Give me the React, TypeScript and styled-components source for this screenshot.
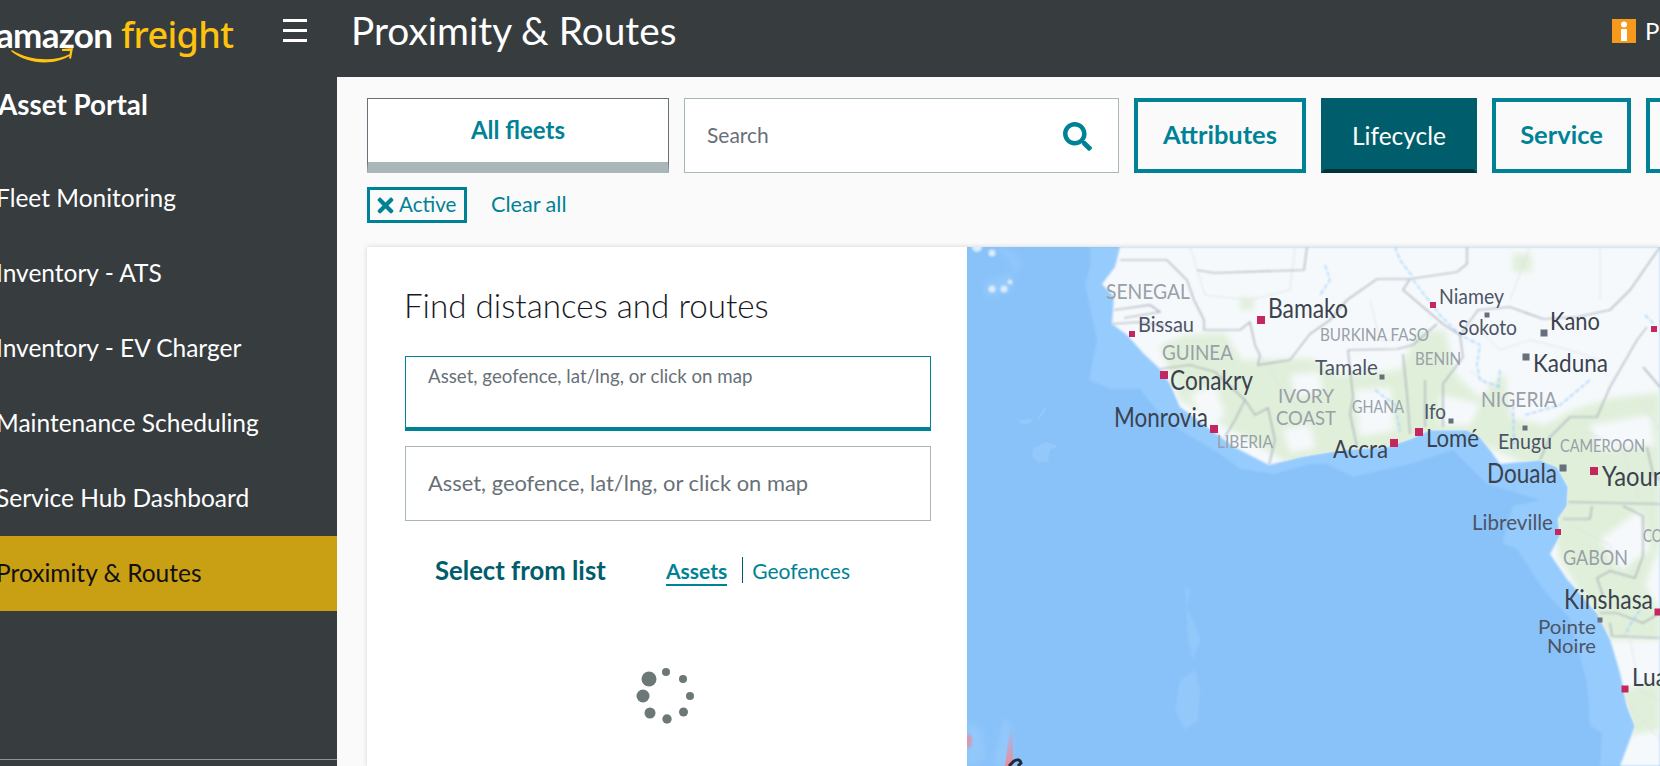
import React from 'react'
import { FaSearch, FaTimes } from 'react-icons/fa'
import styled, { createGlobalStyle } from 'styled-components'

const GlobalStyle = createGlobalStyle`
  html, body {
    margin: 0;
    padding: 0;
    overflow: hidden;
    background: #fafafa;
  }
  * {
    box-sizing: border-box;
  }
`

const FONT = 'Lato, "Noto Sans", "Liberation Sans", sans-serif'
const TEAL = '#008296'
const DARK_TEAL = '#005d6b'
const CHROME = '#373c3f'

const Page = styled.div`
  display: flex;
  flex-direction: column;
  width: 1660px;
  height: 766px;
  overflow: hidden;
  font-family: ${FONT};
`

const TopBar = styled.header`
  flex: none;
  display: flex;
  align-items: center;
  height: 77px;
  background: ${CHROME};
  color: #fff;
`

const Logo = styled.div`
  position: relative;
  flex: none;
  width: 287px;
  margin-left: -4px;
  display: flex;
  align-items: baseline;
  gap: 9px;
  height: 77px;
  padding-top: 11px;
  font-size: 35px;
  line-height: 47px;
`

const LogoWord = styled.span`
  font-weight: 700;
  letter-spacing: -0.7px;
`

const LogoFreight = styled.span`
  color: #ffc20e;
  font-family: "Noto Sans", Lato, sans-serif;
  font-size: 36px;
  font-weight: 500;
  letter-spacing: -0.6px;
`

const LogoSmile = styled.svg`
  position: absolute;
  left: 15px;
  top: 48px;
`

const MenuButton = styled.div`
  flex: none;
  display: flex;
  flex-direction: column;
  gap: 7px;
  width: 24px;
  margin-top: -17px;
  span {
    height: 3px;
    background: #fff;
  }
`

const PageTitle = styled.h1`
  margin: -18px 0 0 44px;
  flex: 1;
  font-size: 38.8px;
  font-weight: 400;
`

const Notice = styled.div`
  flex: none;
  display: flex;
  align-items: center;
  gap: 9px;
  width: 100px;
  margin: -16px -52px 0 0;
  font-size: 24px;
  svg {
    flex: none;
  }
`

const Body = styled.div`
  flex: 1;
  display: flex;
  min-height: 0;
`

const Sidebar = styled.nav`
  flex: none;
  display: flex;
  flex-direction: column;
  width: 337px;
  padding-top: 11px;
  background: ${CHROME};
  color: #fff;
`

const PortalName = styled.div`
  height: 34px;
  margin: 0 0 39px -2px;
  font-size: 27.8px;
  line-height: 34px;
  font-weight: 700;
`

const NavItem = styled.div<{ $active?: boolean }>`
  display: flex;
  align-items: center;
  height: 75px;
  padding-bottom: 2px;
  text-indent: -4px;
  font-size: 24.5px;
  background: ${(p) => (p.$active ? '#c99f13' : 'transparent')};
  color: ${(p) => (p.$active ? '#111' : '#fff')};
`

const SidebarFooter = styled.div`
  flex: none;
  height: 7px;
  margin-top: auto;
  border-top: 1px solid #8d9194;
`

const Main = styled.main`
  flex: 1;
  min-width: 0;
  padding: 21px 0 0 30px;
  background: #fafafa;
  overflow: hidden;
`

const Toolbar = styled.div`
  display: flex;
  gap: 15px;
  height: 75px;
`

const FleetTab = styled.div`
  flex: none;
  display: flex;
  justify-content: center;
  width: 302px;
  padding-top: 17px;
  border: 1px solid #687078;
  border-bottom-width: 11px;
  border-bottom-color: #aab7b8;
  background: #fff;
  color: ${TEAL};
  font-size: 24px;
  line-height: 28px;
  font-weight: 700;
`

const SearchBox = styled.div`
  flex: none;
  display: flex;
  align-items: center;
  justify-content: space-between;
  width: 435px;
  padding: 0 26px 3px 22px;
  border: 1px solid #aab7b8;
  background: #fff;
  color: #687078;
  font-size: 21px;
  svg {
    color: ${TEAL};
    margin-top: 5px;
  }
`

const FilterButton = styled.div<{ $active?: boolean; $width: number }>`
  flex: none;
  display: flex;
  align-items: center;
  justify-content: center;
  width: ${(p) => p.$width}px;
  padding-bottom: ${(p) => (p.$active ? 0 : 3)}px;
  border: 4px solid ${(p) => (p.$active ? DARK_TEAL : TEAL)};
  border-bottom-color: ${(p) => (p.$active ? '#00323b' : TEAL)};
  background: ${(p) => (p.$active ? DARK_TEAL : 'transparent')};
  color: ${(p) => (p.$active ? '#fff' : TEAL)};
  font-size: ${(p) => (p.$active ? 24.5 : 25.5)}px;
  font-weight: ${(p) => (p.$active ? 400 : 700)};
`

const ChipRow = styled.div`
  display: flex;
  align-items: center;
  gap: 24px;
  height: 36px;
  margin-top: 14px;
`

const Chip = styled.div`
  display: flex;
  align-items: center;
  gap: 2px;
  width: 100px;
  height: 36px;
  padding: 0 0 2px 4px;
  border: 3px solid ${TEAL};
  color: ${TEAL};
  font-size: 20.6px;
  svg {
    flex: none;
    margin-top: 2px;
  }
`

const ClearAll = styled.span`
  margin-top: -2px;
  color: ${TEAL};
  font-size: 21.6px;
`

const Workspace = styled.section`
  display: flex;
  height: 519px;
  margin-top: 24px;
  box-shadow: 0 0 5px rgba(0, 0, 0, 0.16);
`

const Panel = styled.div`
  flex: none;
  width: 600px;
  padding: 38px 36px 0 38px;
  background: #fff;
`

const PanelTitle = styled.h2`
  margin: 0 0 30px -1px;
  height: 41px;
  font-size: 33.2px;
  line-height: 41px;
  font-weight: 300;
  color: #16191f;
`

const Field = styled.div<{ $focused?: boolean }>`
  display: flex;
  align-items: ${(p) => (p.$focused ? 'flex-start' : 'center')};
  height: 75px;
  margin-bottom: 15px;
  padding: ${(p) => (p.$focused ? '9px 22px 0' : '0 22px 2px')};
  border: 1px solid ${(p) => (p.$focused ? TEAL : '#aab7b8')};
  border-bottom-width: ${(p) => (p.$focused ? 4 : 1)}px;
  color: #687078;
  font-size: ${(p) => (p.$focused ? 18.7 : 21.9)}px;
  line-height: 20px;
`

const ListHeader = styled.div`
  display: flex;
  align-items: center;
  height: 30px;
  margin: 34px 0 0 30px;
`

const ListTitle = styled.div`
  width: 231px;
  color: ${DARK_TEAL};
  font-size: 25.7px;
  font-weight: 700;
`

const ListTab = styled.div<{ $active?: boolean }>`
  height: 28px;
  margin-top: 3px;
  color: ${TEAL};
  font-size: 21px;
  line-height: 26px;
  font-weight: ${(p) => (p.$active ? 700 : 400)};
  border-bottom: ${(p) => (p.$active ? `2px solid ${TEAL}` : 'none')};
`

const ListDivider = styled.div`
  width: 1px;
  height: 26px;
  margin: 0 9px 0 15px;
  background: ${DARK_TEAL};
`

const Spinner = styled.svg`
  display: block;
  margin: 79px 0 0 230px;
  fill: #6c7778;
`

const MapPane = styled.div`
  flex: none;
  width: 693px;
  background: #88c2f9;
`

const MapCanvas = styled.svg`
  display: block;
  width: 693px;
  height: 519px;
`

const CoastShelf = styled.polygon`
  fill: #96cbfd;
`

const Land = styled.polygon`
  fill: #f6f9fc;
`

const Forest = styled.path`
  fill: #e0efda;
`

const Border = styled.polyline<{ $major?: boolean }>`
  fill: none;
  stroke: ${(p) => (p.$major ? '#a3aab4' : '#dde1e5')};
  stroke-width: ${(p) => (p.$major ? 1.2 : 0.9)};
`

const River = styled.polyline`
  fill: none;
  stroke: #92c9fb;
  stroke-width: 1.2;
  stroke-dasharray: 5 2;
`

const Seamount = styled.path`
  fill: #93c8fb;
`

const Islet = styled.circle`
  fill: #dcedfd;
`

const MapLabel = styled.text<{ $size: number; $tone: string }>`
  font-family: ${FONT};
  font-size: ${(p) => p.$size * 1.2}px;
  fill: ${(p) => p.$tone};
`

const Pin = styled.rect<{ $city?: boolean }>`
  fill: ${(p) => (p.$city ? '#c4275f' : '#666f7d')};
`

const Marker = styled.path`
  fill: none;
  stroke: #1f2a36;
  stroke-width: 3;
`

const CITY = '#3b424d'
const TOWN = '#4c5566'
const REGION = '#98a0a8'

const labels: [string, number, number, number, number, string][] = [
  ['SENEGAL', 1106, 299, 84, 18, REGION],
  ['Bissau', 1138, 332, 56, 18, TOWN],
  ['Bamako', 1268, 318, 80, 22, CITY],
  ['GUINEA', 1162, 360, 71, 18, REGION],
  ['Conakry', 1170, 390, 83, 22, CITY],
  ['Monrovia', 1114, 427, 94, 22, CITY],
  ['LIBERIA', 1217, 448, 56, 15, REGION],
  ['IVORY', 1278, 403, 56, 16, REGION],
  ['COAST', 1276, 425, 60, 16, REGION],
  ['Tamale', 1315, 375, 63, 18, TOWN],
  ['BURKINA FASO', 1320, 341, 109, 15, REGION],
  ['BENIN', 1415, 365, 46, 15, REGION],
  ['GHANA', 1352, 413, 52, 15, REGION],
  ['Ifo', 1424, 419, 22, 18, TOWN],
  ['Accra', 1333, 458, 55, 21, CITY],
  ['Lomé', 1426, 447, 53, 21, CITY],
  ['Niamey', 1439, 304, 65, 18, TOWN],
  ['Sokoto', 1458, 335, 59, 18, TOWN],
  ['Kano', 1550, 330, 50, 21, CITY],
  ['Kaduna', 1533, 372, 75, 21, CITY],
  ['NIGERIA', 1481, 407, 76, 18, REGION],
  ['Enugu', 1498, 449, 54, 18, TOWN],
  ['CAMEROON', 1560, 452, 85, 15, REGION],
  ['Douala', 1487, 483, 70, 22, CITY],
  ['Yaoundé', 1602, 486, 90, 22, CITY],
  ['Libreville', 1472, 530, 81, 18, TOWN],
  ['GABON', 1563, 565, 65, 18, REGION],
  ['CONGO', 1643, 542, 50, 15, REGION],
  ['Kinshasa', 1564, 609, 89, 22, CITY],
  ['Pointe', 1538, 634, 58, 16, TOWN],
  ['Noire', 1547, 653, 49, 16, TOWN],
  ['Luanda', 1632, 686, 72, 21, CITY]
]

const pins: [number, number, number, boolean][] = [
  [1132, 334, 6, true],
  [1261, 320, 8, true],
  [1164, 375, 8, true],
  [1214, 429, 8, true],
  [1433, 305, 6, true],
  [1394, 443, 8, true],
  [1419, 432, 8, true],
  [1594, 471, 8, true],
  [1654, 329, 6, true],
  [1558, 532, 6, true],
  [1658, 612, 7, true],
  [1625, 689, 7, true],
  [1382, 377, 5, false],
  [1487, 315, 5, false],
  [1544, 333, 7, false],
  [1526, 357, 7, false],
  [1451, 421, 5, false],
  [1525, 428, 5, false],
  [1563, 468, 7, false],
  [1600, 620, 5, false]
]

const LAND_SHAPE =
  '1120,247 1115,267 1102,284 1114,297 1112,324 1127,335 1144,354 1160,369 1170,384 1180,407 1207,427 1234,447 1269,465 1300,457 1317,454 1343,450 1387,447 1410,439 1430,430 1467,430 1480,437 1490,450 1500,464 1540,460 1557,467 1568,487 1567,506 1558,519 1560,536 1550,554 1567,579 1597,613 1610,639 1620,673 1627,706 1635,726 1620,766 1660,766 1660,247'

const SHELF_SHAPE =
  '1090,247 1090,267 1085,284 1097,340 1089,380 1110,389 1140,389 1154,407 1180,430 1220,454 1240,469 1274,474 1310,464 1327,464 1353,477 1410,464 1453,450 1487,484 1540,500 1513,506 1502,543 1517,549 1543,589 1570,619 1587,683 1590,726 1602,733 1600,766 1660,766 1660,247'

const FOREST_SHAPE =
  'M1160 346 L1185 335 L1225 333 L1242 360 L1310 358 L1340 375 L1400 370 L1418 332 L1445 330 L1456 375 L1480 398 L1505 372 L1510 418 L1545 425 L1572 410 L1612 398 L1660 392 L1660 545 L1645 585 L1660 612 L1660 640 L1610 640 L1560 560 L1540 470 L1470 440 L1300 470 L1180 400 Z M1240 298 L1254 298 L1254 310 L1240 310 Z M1513 254 L1532 254 L1532 272 L1513 272 Z M1620 690 L1660 680 L1660 730 L1630 735 Z'

const CLEARINGS =
  'M1290 375 L1320 372 L1322 392 L1296 396 Z M1355 390 L1390 388 L1395 430 L1360 436 Z M1283 430 L1310 425 L1315 448 L1290 452 Z M1440 395 L1480 404 L1470 425 L1440 424 Z M1510 385 L1575 392 L1560 405 L1512 415 Z M1600 540 L1640 510 L1650 550 L1620 570 Z M1190 395 L1215 385 L1225 415 L1210 425 Z M1590 425 L1650 415 L1655 445 L1600 450 Z'

const majorBorders = [
  '1120,260 1167,260 1187,280 1194,300 1204,320 1204,330 1240,330 1250,322 1255,345 1260,355 1258,365 1290,360 1310,334 1330,320 1347,300 1377,279 1410,279 1457,272 1467,264 1467,247',
  '1197,270 1214,273 1304,270 1307,247',
  '1410,279 1403,290 1423,307 1443,324 1460,335 1463,357 1443,384 1443,427',
  '1348,350 1397,349 1413,345 1437,324',
  '1348,350 1353,397 1350,414 1357,447',
  '1403,354 1407,394 1410,434',
  '1425,380 1425,427',
  '1460,335 1478,310 1510,307 1543,319 1577,317 1610,310 1630,290 1660,247',
  '1647,327 1637,340 1610,387 1597,417 1570,417 1550,437 1540,460',
  '1643,367 1660,387',
  '1647,447 1653,474 1660,480',
  '1568,502 1660,504',
  '1563,519 1590,519 1592,506',
  '1623,506 1643,516 1643,556 1635,578 1610,571 1597,578 1603,596',
  '1600,613 1617,613 1643,623 1660,613',
  '1610,623 1612,636 1660,638',
  '1114,310 1150,305 1160,312 1124,318',
  '1112,324 1140,322 1165,326',
  '1160,369 1190,365 1215,372 1245,400 1235,420 1225,437',
  '1245,400 1255,415 1268,408 1275,440 1269,465'
]

const minorBorders = [
  '1190,247 1205,295 1250,300 1290,290 1295,247',
  '1260,355 1290,400 1310,420',
  '1370,300 1380,340 1400,340',
  '1480,330 1500,350 1530,340 1570,350 1600,360',
  '1470,370 1500,395 1520,430',
  '1530,247 1510,300',
  '1600,247 1600,300',
  '1580,430 1620,445 1640,500',
  '1640,400 1660,430',
  '1570,525 1610,545 1625,580',
  '1630,640 1640,690 1660,700',
  '1625,700 1660,740'
]

const rivers = [
  '1395,247 1400,260 1413,277',
  '1413,280 1440,315 1460,335 1480,345 1477,365 1480,380 1500,387',
  '1500,370 1498,388',
  '1525,415 1560,405 1590,380',
  '1513,405 1514,450',
  '1325,265 1330,280 1320,295',
  '1375,390 1395,405 1400,432',
  '1645,315 1655,325',
  '1640,610 1630,625 1625,635'
]

const mapIslets: [number, number, number][] = [
  [977, 247, 5],
  [992, 253, 3.5],
  [992, 289, 3.5],
  [1004, 289, 3.5],
  [1010, 282, 2.5]
]

const spinnerDots: [number, number, number][] = [
  [7, 35, 7.5],
  [24, 28, 4],
  [41, 35, 4],
  [48, 52, 4],
  [41.5, 68, 4.5],
  [25, 75, 4.7],
  [8, 69, 5.5],
  [1, 52, 6.5]
]

const navItems = [
  'Fleet Monitoring',
  'Inventory - ATS',
  'Inventory - EV Charger',
  'Maintenance Scheduling',
  'Service Hub Dashboard',
  'Proximity & Routes'
]

const InfoBadge = () => (
  <svg width="24" height="24" viewBox="0 0 24 24">
    <rect width="24" height="24" fill="#f7991c" />
    <circle cx="12" cy="5.5" r="3" fill="#fff" />
    <rect x="9" y="10" width="6" height="12" fill="#fff" />
  </svg>
)

const WorldMap = () => (
  <MapCanvas viewBox="967 247 693 519">
    <defs>
      <clipPath id="land-clip">
        <polygon points={LAND_SHAPE} />
      </clipPath>
      <filter id="soft">
        <feGaussianBlur stdDeviation="0.8" />
      </filter>
      <filter id="haze">
        <feGaussianBlur stdDeviation="3" />
      </filter>
      <linearGradient id="flare" x1="0" y1="0" x2="0" y2="1">
        <stop offset="0" stopColor="#f08a98" stopOpacity="0" />
        <stop offset="1" stopColor="#f08a98" />
      </linearGradient>
    </defs>
    <CoastShelf points={SHELF_SHAPE} filter="url(#soft)" />
    <Seamount d="M1000 247 Q1020 250 1021 270 L1012 272 Q1012 254 995 250 Z M985 282 L1012 272 L1012 292 L985 297 Z" filter="url(#haze)" />
    <Seamount d="M1036 421 L1045 406 L1046 410 L1040 418 Z M1018 421 L1030 418 L1033 422 L1024 425 Z M1033 448 L1046 442 L1058 446 L1050 450 L1048 462 L1038 463 L1032 456 Z" />
    <Seamount d="M1185 586 L1190 590 L1187 608 L1195 625 L1201 640 L1192 660 L1188 640 Z M1180 680 L1195 670 L1200 690 L1198 720 L1185 730 L1175 710 Z" filter="url(#soft)" />
    <Seamount d="M1003 722 L1011 720 L1012 766 L992 766 Z M967 722 L982 728 L986 760 L967 766 Z" filter="url(#haze)" />
    <Land points={LAND_SHAPE} filter="url(#soft)" />
    <g clipPath="url(#land-clip)">
      <g filter="url(#haze)">
        <Forest d={FOREST_SHAPE} />
        <Land as="path" d={CLEARINGS} />
      </g>
      <g filter="url(#soft)">
        {minorBorders.map((pts) => (
          <Border key={pts} points={pts} />
        ))}
        {majorBorders.map((pts) => (
          <Border key={pts} points={pts} $major />
        ))}
        {rivers.map((pts) => (
          <River key={pts} points={pts} />
        ))}
      </g>
    </g>
    <g filter="url(#soft)">
      {mapIslets.map(([cx, cy, r]) => (
        <Islet key={cx + cy} cx={cx} cy={cy} r={r} />
      ))}
    </g>
    <path d="M1010 728 L1013 728 L1013 766 L1005 766 Z" fill="url(#flare)" />
    <ellipse cx="968" cy="741" rx="4" ry="7" fill="#f08a98" opacity="0.7" filter="url(#soft)" />
    <Marker d="M1009 766 L1014 761 Q1020 758 1021 763 L1018 766" />
    {pins.map(([x, y, size, city]) => (
      <Pin key={`${x}-${y}`} x={x - size / 2} y={y - size / 2} width={size} height={size} $city={city} />
    ))}
    {labels.map(([text, x, y, width, size, tone]) => (
      <MapLabel key={text} x={x} y={y} textLength={width} lengthAdjust="spacingAndGlyphs" $size={size} $tone={tone}>
        {text}
      </MapLabel>
    ))}
  </MapCanvas>
)

export default function App() {
  return (
    <>
      <GlobalStyle />
      <Page>
        <TopBar>
          <Logo>
            <LogoWord>amazon</LogoWord>
            <LogoFreight>freight</LogoFreight>
            <LogoSmile width="64" height="16" viewBox="0 0 64 16">
              <path d="M1 2 C 18 13, 44 14, 59 6 L 60 7 C 44 18, 16 17, 0 3 Z" fill="#ffc20e" />
              <path d="M51 1 L62 0 L60 11 L58 10 L59 3 L51 3 Z" fill="#ffc20e" />
            </LogoSmile>
          </Logo>
          <MenuButton>
            <span />
            <span />
            <span />
          </MenuButton>
          <PageTitle>Proximity &amp; Routes</PageTitle>
          <Notice>
            <InfoBadge />
            Preview
          </Notice>
        </TopBar>
        <Body>
          <Sidebar>
            <PortalName>Asset Portal</PortalName>
            {navItems.map((item) => (
              <NavItem key={item} $active={item === 'Proximity & Routes'}>
                {item}
              </NavItem>
            ))}
            <SidebarFooter />
          </Sidebar>
          <Main>
            <Toolbar>
              <FleetTab>All fleets</FleetTab>
              <SearchBox>
                Search
                <FaSearch size={29} />
              </SearchBox>
              <FilterButton $width={172}>Attributes</FilterButton>
              <FilterButton $width={156} $active>
                Lifecycle
              </FilterButton>
              <FilterButton $width={139}>Service</FilterButton>
              <FilterButton $width={139} />
            </Toolbar>
            <ChipRow>
              <Chip>
                <FaTimes size={23} />
                Active
              </Chip>
              <ClearAll>Clear all</ClearAll>
            </ChipRow>
            <Workspace>
              <Panel>
                <PanelTitle>Find distances and routes</PanelTitle>
                <Field $focused>Asset, geofence, lat/lng, or click on map</Field>
                <Field>Asset, geofence, lat/lng, or click on map</Field>
                <ListHeader>
                  <ListTitle>Select from list</ListTitle>
                  <ListTab $active>Assets</ListTab>
                  <ListDivider />
                  <ListTab>Geofences</ListTab>
                </ListHeader>
                <Spinner width="60" height="60" viewBox="-7 20 60 60">
                  {spinnerDots.map(([cx, cy, r]) => (
                    <circle key={`${cx}-${cy}`} cx={cx} cy={cy} r={r} />
                  ))}
                </Spinner>
              </Panel>
              <MapPane>
                <WorldMap />
              </MapPane>
            </Workspace>
          </Main>
        </Body>
      </Page>
    </>
  )
}
